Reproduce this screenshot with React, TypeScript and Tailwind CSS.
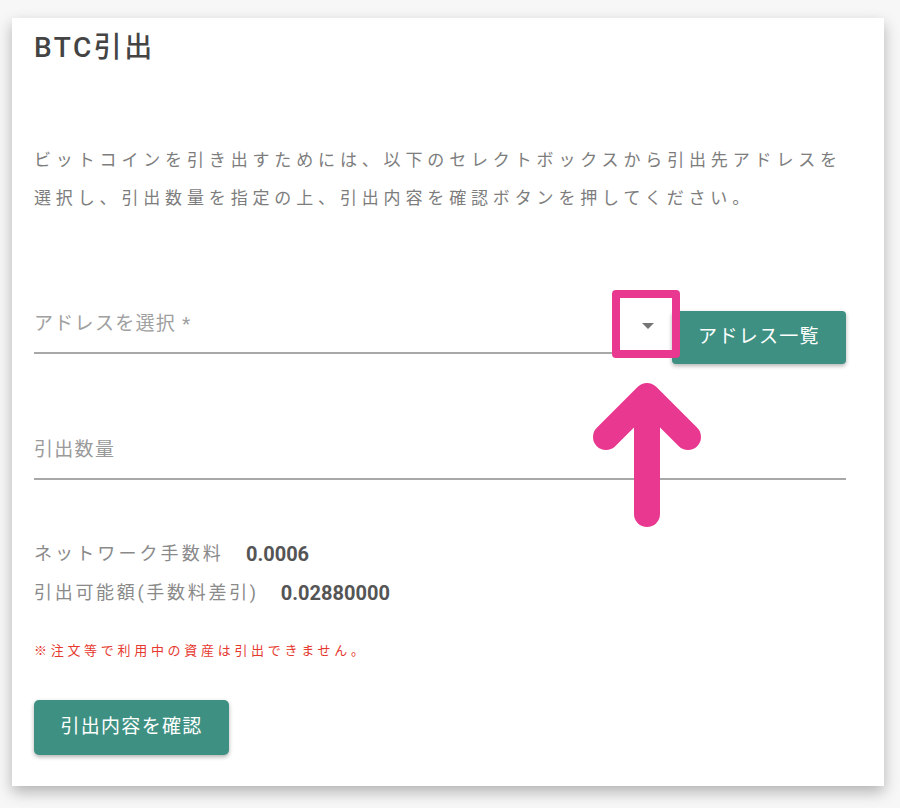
const FONT = "font-['Roboto','Noto_Sans_CJK_JP',sans-serif]";

function PinkArrow() {
  return (
    <svg
      className="absolute left-[580px] top-[370px]"
      width="134"
      height="170"
      viewBox="580 370 134 170"
      aria-hidden="true"
    >
      <g stroke="#e8388f" strokeWidth="26" strokeLinecap="round" strokeLinejoin="round" fill="none">
        <polyline points="606,437 647,396 688,437" />
        <line x1="647" y1="398" x2="647" y2="514" />
      </g>
    </svg>
  );
}

export default function App() {
  return (
    <div className={`relative w-[900px] h-[808px] bg-[#f7f7f7] pt-[18px] pl-[12px] ${FONT}`}>
      <div className="w-[872px] h-[768px] bg-white shadow-[0_6px_14px_rgba(0,0,0,0.28)] pl-[22px] pr-[38px] pt-[13px]">
        {/* Header */}
        <h1 className="text-[28px] leading-[34px] font-medium text-[#444] tracking-[2.5px]">BTC引出</h1>

        <p className="mt-[76px] text-[17px] leading-[38px] tracking-[4.85px] text-[#7d7d7d]">
          ビットコインを引き出すためには、以下のセレクトボックスから引出先アドレスを
          <br />
          選択し、引出数量を指定の上、引出内容を確認ボタンを押してください。
        </p>

        {/* Address select */}
        <div className="mt-[84px] flex items-start gap-[8px]">
          <div className="w-[630px] h-[53px] border-b-2 border-[#a8a8a8] flex items-center justify-between pr-[10px] pb-[4px]">
            <span className="text-[19px] tracking-[1.3px] text-[#a0a0a0]">アドレスを選択 *</span>
            <span className="block w-0 h-0 border-l-[6px] border-r-[6px] border-t-[6px] border-l-transparent border-r-transparent border-t-[#757575] mt-[2px]" />
          </div>
          <button className="mt-[10px] w-[174px] h-[53px] rounded-[4px] bg-[#3e9182] text-white text-[19px] tracking-[1.3px] shadow-[0_2px_4px_rgba(0,0,0,0.3)]">
            アドレス一覧
          </button>
        </div>

        {/* Quantity */}
        <div className="mt-[61px] h-[55px] border-b-2 border-[#a8a8a8] flex items-center pb-[2px]">
          <span className="text-[19px] tracking-[1.3px] text-[#9a9a9a]">引出数量</span>
        </div>

        {/* Fees */}
        <div className="mt-[56px] flex flex-col gap-[3px] text-[18px] leading-[36px]">
          <div className="flex items-center">
            <span className="text-[#8a8a8a] tracking-[3.1px]">ネットワーク手数料</span>
            <span className="ml-[22px] text-[20px] font-bold text-[#555]">0.0006</span>
          </div>
          <div className="flex items-center">
            <span className="text-[#8a8a8a] tracking-[2.7px]">引出可能額(手数料差引)</span>
            <span className="ml-[22px] text-[20px] font-bold text-[#555]">0.02880000</span>
          </div>
        </div>

        <p className="mt-[30px] text-[13px] leading-[20px] tracking-[3.7px] text-[#e5392f]">
          ※注文等で利用中の資産は引出できません。
        </p>

        <button className="mt-[39px] w-[195px] h-[55px] rounded-[5px] bg-[#3e9182] text-white text-[19px] tracking-[1.3px] shadow-[0_2px_4px_rgba(0,0,0,0.3)]">
          引出内容を確認
        </button>
      </div>

      {/* Annotation overlay */}
      <div className="absolute left-[612px] top-[290px] w-[68px] h-[68px] border-[8px] border-[#e8388f] rounded-[4px]" />
      <PinkArrow />
    </div>
  );
}
